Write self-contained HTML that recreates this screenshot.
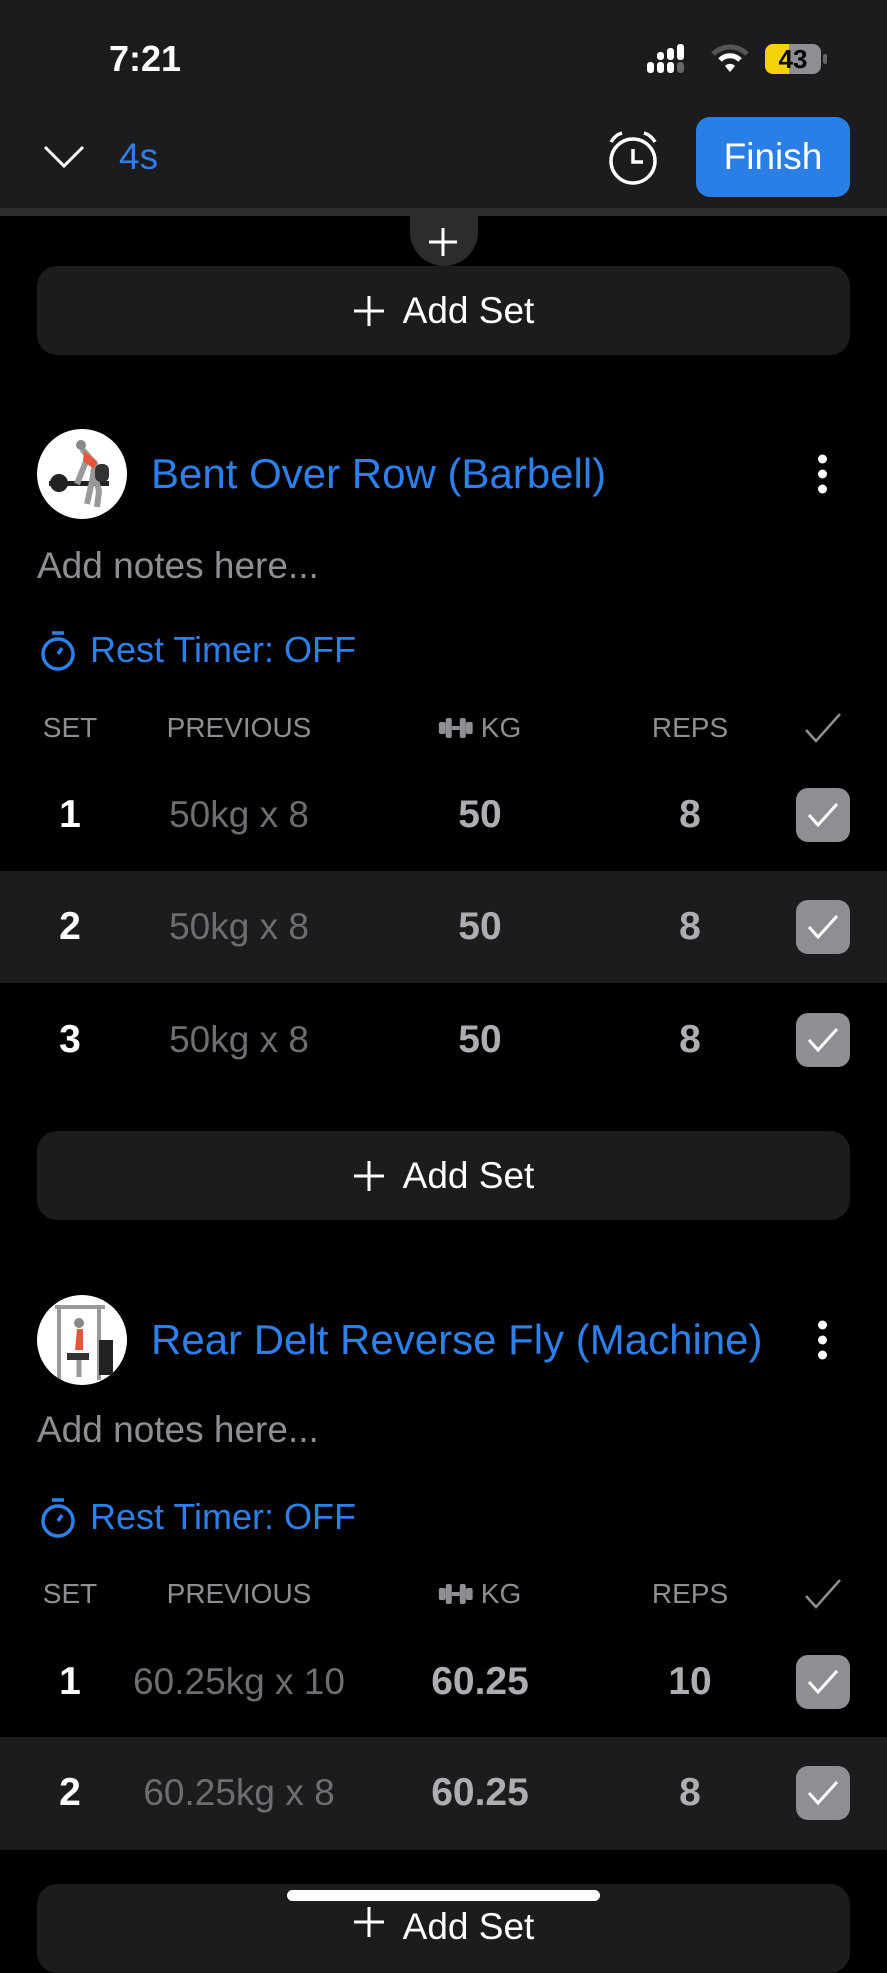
<!DOCTYPE html>
<html><head><meta charset="utf-8"><style>
*{margin:0;padding:0;box-sizing:border-box}
body{width:887px;height:1920px;background:#000;overflow:hidden;position:relative;font-family:"Liberation Sans",sans-serif;color:#fff}
.a{position:absolute}
.hdr{left:0;top:0;width:887px;height:208px;background:#1c1c1e}
.line{left:0;top:208px;width:887px;height:8px;background:#2c2c2e}
.btn{left:37px;width:813px;height:89px;background:#1c1c1e;border-radius:20px;display:flex;align-items:center;justify-content:center;font-size:37px;gap:18px}
.title{left:151px;font-size:42px;color:#2d80ea;transform:translateY(-50%);white-space:nowrap}
.notes{left:37px;font-size:37px;color:#8e8e93;transform:translateY(-50%)}
.rest{left:40px;font-size:36px;color:#2d80ea;transform:translateY(-50%);display:flex;align-items:center;gap:14px}
.th{font-size:28px;color:#8e8e93;transform:translate(-50%,-50%);white-space:nowrap}
.td{font-size:37px;transform:translate(-50%,-50%);white-space:nowrap}
.b{font-size:39px;font-weight:bold}
.rowbg{left:0;width:887px;height:112px;background:#1c1c1e}
.cb{width:54px;height:54px;border-radius:12px;background:#8e8e93;transform:translate(-50%,-50%);display:flex;align-items:center;justify-content:center}
.av{width:90px;height:90px;border-radius:50%;background:#fff;transform:translateY(-50%);left:37px;overflow:hidden}
.dots{left:818px;width:10px;transform:translateY(-50%)}
.dots i{display:block;width:9px;height:9px;border-radius:50%;background:#fff;margin:6px 0}
</style></head><body>
<div class="a hdr"></div>
<div class="a" style="left:109px;top:38px;font-size:36px;font-weight:bold">7:21</div>
<svg class="a" style="left:647px;top:44px" width="48" height="30"><rect x="0" y="18" width="7" height="11" rx="3" fill="#fff"/><rect x="10" y="18" width="7" height="11" rx="3" fill="#fff"/><rect x="20" y="18" width="7" height="11" rx="3" fill="#fff"/><rect x="30" y="18" width="7" height="11" rx="3" fill="#666"/><rect x="10" y="8" width="7" height="8" rx="3" fill="#fff"/><rect x="20" y="4" width="7" height="12" rx="3" fill="#fff"/><rect x="30" y="0" width="7" height="16" rx="3" fill="#fff"/></svg>
<svg class="a" style="left:710px;top:44px" width="40" height="30" viewBox="0 0 40 30"><path d="M3 10 A24 24 0 0 1 37 10" stroke="#555" stroke-width="5" fill="none"/><path d="M10 16 A14 14 0 0 1 30 16" stroke="#fff" stroke-width="5" fill="none"/><path d="M15 22 L20 28 L25 22 A7 7 0 0 0 15 22Z" fill="#fff"/></svg>
<div class="a" style="left:765px;top:44px;width:56px;height:30px;border-radius:8px;background:linear-gradient(90deg,#f5d10a 0 43%,#8e8e93 43%);color:#000;font-weight:bold;font-size:26px;text-align:center;line-height:30px">43</div>
<div class="a" style="left:823px;top:54px;width:4px;height:10px;border-radius:2px;background:#666"></div>
<svg class="a" style="left:42px;top:143px" width="44" height="28"><path d="M3 4 L22 23 L41 4" stroke="#fff" stroke-width="3" fill="none"/></svg>
<div class="a" style="left:119px;top:136px;font-size:37px;color:#2d80ea">4s</div>
<svg class="a" style="left:605px;top:130px" width="56" height="56" viewBox="0 0 56 56"><circle cx="28" cy="31" r="22" stroke="#fff" stroke-width="3.5" fill="none"/><path d="M28 19 V32 H38" stroke="#fff" stroke-width="3.5" fill="none"/><path d="M6 12 Q10 5 17 3 M50 12 Q46 5 39 3" stroke="#fff" stroke-width="3.5" fill="none"/></svg>
<div class="a" style="left:696px;top:117px;width:154px;height:80px;background:#2a7fe6;border-radius:14px;font-size:37px;display:flex;align-items:center;justify-content:center">Finish</div>
<div class="a line"></div>
<div class="a" style="left:410px;top:214px;width:68px;height:52px;background:#2c2c2e;border-radius:0 0 34px 34px"></div>
<svg class="a" style="left:428px;top:227px" width="30" height="30"><path d="M15 1V29M1 15H29" stroke="#fff" stroke-width="3"/></svg>
<div class="a btn" style="top:266px"><svg width="32" height="32"><path d="M16 1V31M1 16H31" stroke="#fff" stroke-width="3"/></svg>Add Set</div>

<div class="a av" style="top:474px"><svg width="90" height="90"><rect x="12" y="52" width="60" height="5" fill="#222"/><circle cx="22" cy="54" r="9" fill="#222"/><path d="M45 20 L58 35 L55 52 L50 75 M50 30 L40 55 M56 40 L62 62 L60 78" stroke="#999" stroke-width="6" fill="none"/><path d="M47 22 L60 32 L57 40 L46 32Z" fill="#e8553a"/><circle cx="44" cy="16" r="5" fill="#888"/><rect x="58" y="35" width="14" height="18" rx="6" fill="#333"/></svg></div>
<div class="a title" style="top:474px">Bent Over Row (Barbell)</div>
<div class="a dots" style="top:474px"><i></i><i></i><i></i></div>
<div class="a notes" style="top:566px">Add notes here...</div>
<div class="a rest" style="top:650px"><svg width="36" height="42" viewBox="0 0 36 42"><circle cx="18" cy="25" r="15" stroke="#2d80ea" stroke-width="3.5" fill="none"/><path d="M12 4H24M18 25L22 19" stroke="#2d80ea" stroke-width="3.5"/></svg>Rest Timer: OFF</div>

<div class="a th" style="left:70px;top:728px">SET</div>
<div class="a th" style="left:239px;top:728px">PREVIOUS</div>
<div class="a th" style="left:480px;top:728px;display:flex;align-items:center;gap:8px"><svg width="34" height="20"><rect x="0" y="4" width="7" height="12" rx="2" fill="#8e8e93"/><rect x="27" y="4" width="7" height="12" rx="2" fill="#8e8e93"/><rect x="7" y="0" width="6" height="20" rx="2" fill="#8e8e93"/><rect x="21" y="0" width="6" height="20" rx="2" fill="#8e8e93"/><rect x="13" y="8" width="8" height="4" fill="#8e8e93"/></svg>KG</div>
<div class="a th" style="left:690px;top:728px">REPS</div>
<svg class="a" style="left:804px;top:712px" width="38" height="32"><path d="M2 18 L12 29 L36 2" stroke="#8e8e93" stroke-width="2.5" fill="none"/></svg>

<div class="a rowbg" style="top:871px"></div>

<div class="a td b" style="left:70px;top:815px">1</div>
<div class="a td" style="left:239px;top:815px;color:#6d6d72">50kg x 8</div>
<div class="a td b" style="left:480px;top:815px;color:#aeaeb2">50</div>
<div class="a td b" style="left:690px;top:815px;color:#aeaeb2">8</div>
<div class="a cb" style="left:823px;top:815px"><svg width="32" height="26"><path d="M2 13 L11 23 L30 2" stroke="#fff" stroke-width="3" fill="none"/></svg></div>

<div class="a td b" style="left:70px;top:927px">2</div>
<div class="a td" style="left:239px;top:927px;color:#6d6d72">50kg x 8</div>
<div class="a td b" style="left:480px;top:927px;color:#aeaeb2">50</div>
<div class="a td b" style="left:690px;top:927px;color:#aeaeb2">8</div>
<div class="a cb" style="left:823px;top:927px"><svg width="32" height="26"><path d="M2 13 L11 23 L30 2" stroke="#fff" stroke-width="3" fill="none"/></svg></div>

<div class="a td b" style="left:70px;top:1040px">3</div>
<div class="a td" style="left:239px;top:1040px;color:#6d6d72">50kg x 8</div>
<div class="a td b" style="left:480px;top:1040px;color:#aeaeb2">50</div>
<div class="a td b" style="left:690px;top:1040px;color:#aeaeb2">8</div>
<div class="a cb" style="left:823px;top:1040px"><svg width="32" height="26"><path d="M2 13 L11 23 L30 2" stroke="#fff" stroke-width="3" fill="none"/></svg></div>

<div class="a btn" style="top:1131px"><svg width="32" height="32"><path d="M16 1V31M1 16H31" stroke="#fff" stroke-width="3"/></svg>Add Set</div>

<div class="a av" style="top:1340px"><svg width="90" height="90"><rect x="20" y="10" width="4" height="75" fill="#999"/><rect x="60" y="10" width="4" height="75" fill="#999"/><rect x="18" y="10" width="50" height="4" fill="#999"/><rect x="62" y="45" width="14" height="35" fill="#222"/><circle cx="42" cy="28" r="5" fill="#888"/><path d="M40 34 L46 34 L46 55 L38 55Z" fill="#e8553a"/><rect x="30" y="58" width="22" height="7" fill="#333"/><path d="M42 65 L42 82" stroke="#999" stroke-width="5"/></svg></div>
<div class="a title" style="top:1340px">Rear Delt Reverse Fly (Machine)</div>
<div class="a dots" style="top:1340px"><i></i><i></i><i></i></div>
<div class="a notes" style="top:1430px">Add notes here...</div>
<div class="a rest" style="top:1517px"><svg width="36" height="42" viewBox="0 0 36 42"><circle cx="18" cy="25" r="15" stroke="#2d80ea" stroke-width="3.5" fill="none"/><path d="M12 4H24M18 25L22 19" stroke="#2d80ea" stroke-width="3.5"/></svg>Rest Timer: OFF</div>

<div class="a th" style="left:70px;top:1594px">SET</div>
<div class="a th" style="left:239px;top:1594px">PREVIOUS</div>
<div class="a th" style="left:480px;top:1594px;display:flex;align-items:center;gap:8px"><svg width="34" height="20"><rect x="0" y="4" width="7" height="12" rx="2" fill="#8e8e93"/><rect x="27" y="4" width="7" height="12" rx="2" fill="#8e8e93"/><rect x="7" y="0" width="6" height="20" rx="2" fill="#8e8e93"/><rect x="21" y="0" width="6" height="20" rx="2" fill="#8e8e93"/><rect x="13" y="8" width="8" height="4" fill="#8e8e93"/></svg>KG</div>
<div class="a th" style="left:690px;top:1594px">REPS</div>
<svg class="a" style="left:804px;top:1578px" width="38" height="32"><path d="M2 18 L12 29 L36 2" stroke="#8e8e93" stroke-width="2.5" fill="none"/></svg>

<div class="a rowbg" style="top:1737px;height:113px"></div>

<div class="a td b" style="left:70px;top:1682px">1</div>
<div class="a td" style="left:239px;top:1682px;color:#6d6d72">60.25kg x 10</div>
<div class="a td b" style="left:480px;top:1682px;color:#aeaeb2">60.25</div>
<div class="a td b" style="left:690px;top:1682px;color:#aeaeb2">10</div>
<div class="a cb" style="left:823px;top:1682px"><svg width="32" height="26"><path d="M2 13 L11 23 L30 2" stroke="#fff" stroke-width="3" fill="none"/></svg></div>

<div class="a td b" style="left:70px;top:1793px">2</div>
<div class="a td" style="left:239px;top:1793px;color:#6d6d72">60.25kg x 8</div>
<div class="a td b" style="left:480px;top:1793px;color:#aeaeb2">60.25</div>
<div class="a td b" style="left:690px;top:1793px;color:#aeaeb2">8</div>
<div class="a cb" style="left:823px;top:1793px"><svg width="32" height="26"><path d="M2 13 L11 23 L30 2" stroke="#fff" stroke-width="3" fill="none"/></svg></div>

<div class="a btn" style="top:1884px;align-items:flex-start;padding-top:22px"><svg width="32" height="32"><path d="M16 1V31M1 16H31" stroke="#fff" stroke-width="3"/></svg>Add Set</div>
<div class="a" style="left:287px;top:1890px;width:313px;height:11px;border-radius:6px;background:#fff"></div>
</body></html>
